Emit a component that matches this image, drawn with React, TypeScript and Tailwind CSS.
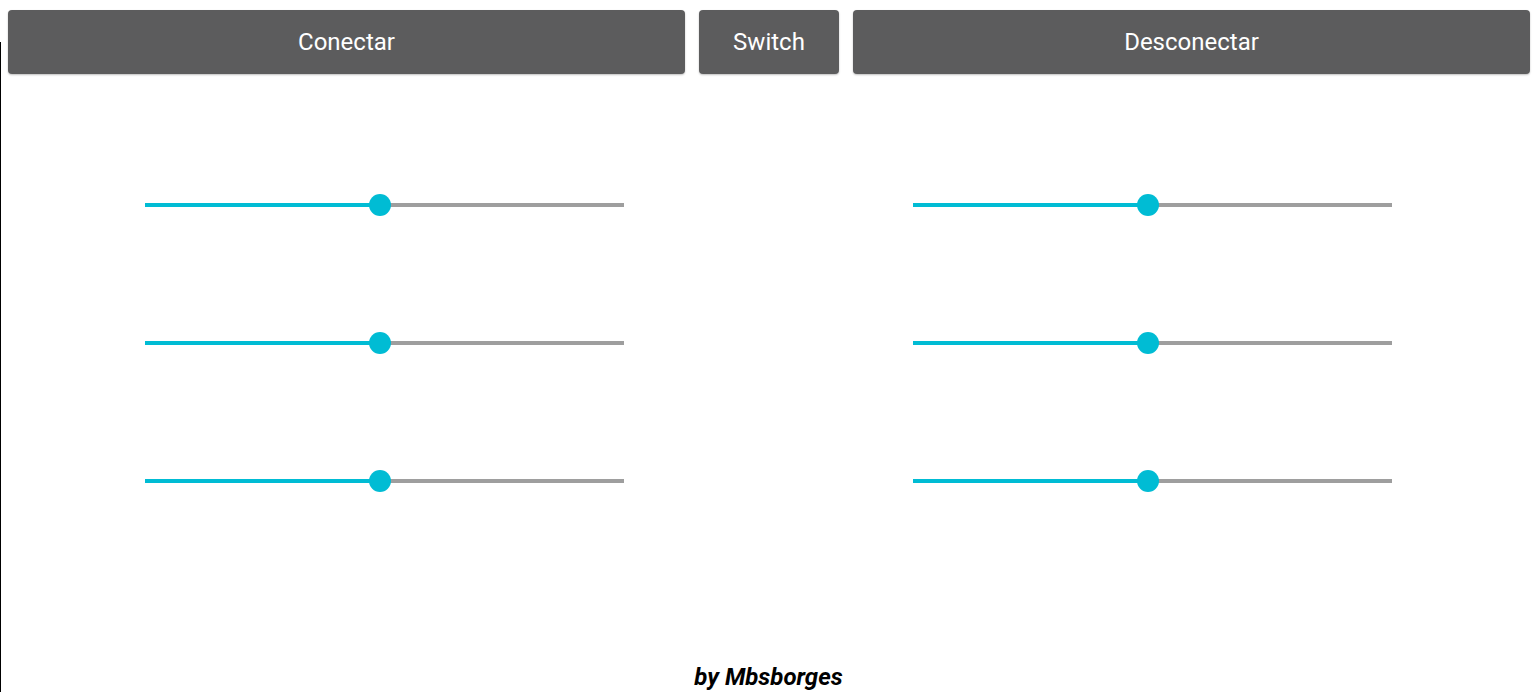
const rows = [0, 1, 2]

function Slider() {
  // value sits just under the middle of the track
  return (
    <div className="relative h-[22px] w-[479px]">
      <div className="absolute left-0 right-0 top-[9px] h-[4px] bg-[#9e9e9e]" />
      <div className="absolute left-0 top-[9px] h-[4px] w-[235px] bg-[#00bcd4]" />
      <div className="absolute left-[224px] top-0 h-[22px] w-[22px] rounded-full bg-[#00bcd4]" />
    </div>
  )
}

function Btn({ label, className }: { label: string; className: string }) {
  return (
    <button
      className={
        "flex h-16 items-center justify-center rounded-[4px] bg-[#5c5c5d] text-[24px] text-white shadow-[0_1px_2px_rgba(0,0,0,0.25)] " +
        className
      }
    >
      {label}
    </button>
  )
}

export default function App() {
  return (
    <div className="flex h-[692px] w-[1536px] bg-white font-['Roboto',sans-serif]">
      <div className="mt-[42px] w-px bg-black" />
      <div className="flex flex-1 flex-col">
        {/* Header buttons */}
        <div className="flex gap-[14px] pl-[7px] pr-[6px] pt-[10px]">
          <Btn label="Conectar" className="flex-1" />
          <Btn label="Switch" className="w-[140px]" />
          <Btn label="Desconectar" className="flex-1" />
        </div>

        {/* Sliders */}
        <div className="grid grid-cols-2 pt-[120px]">
          {[0, 1].map((col) => (
            <div key={col} className="flex flex-col items-center gap-[116px]">
              {rows.map((r) => (
                <Slider key={r} />
              ))}
            </div>
          ))}
        </div>

        <footer className="mt-auto pb-[1px] text-center text-[24px] font-bold italic leading-[28px] text-black">
          by Mbsborges
        </footer>
      </div>
    </div>
  )
}
